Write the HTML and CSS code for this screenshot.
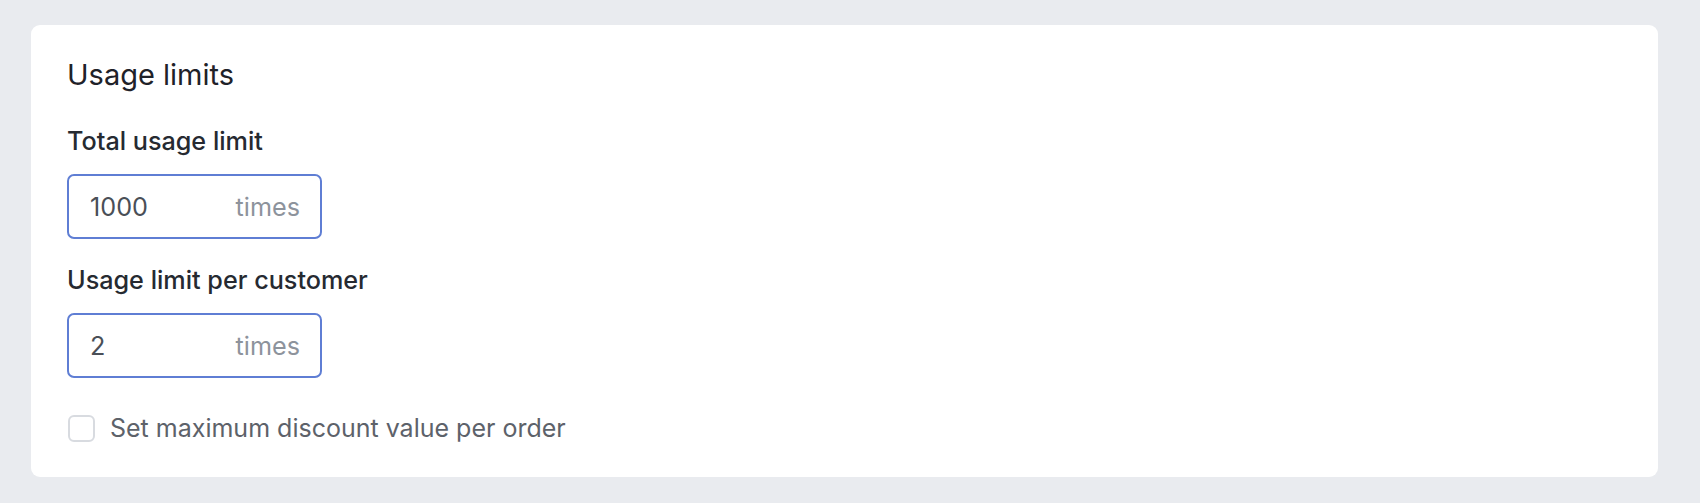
FILE: index.html
```html
<!DOCTYPE html>
<html>
<head>
<meta charset="utf-8">
<link rel="stylesheet" href="styles.css">
</head>
<body>
<div class="page">
  <section class="card">
    <h2 class="title">Usage limits</h2>
    <div class="field">
      <label class="label">Total usage limit</label>
      <div class="input">
        <span class="value">1000</span>
        <span class="suffix">times</span>
      </div>
    </div>
    <div class="field">
      <label class="label">Usage limit per customer</label>
      <div class="input">
        <span class="value">2</span>
        <span class="suffix">times</span>
      </div>
    </div>
    <label class="check">
      <span class="box"></span>
      <span class="check-text">Set maximum discount value per order</span>
    </label>
  </section>
</div>
</body>
</html>
```

FILE: styles.css
```css
* { box-sizing: border-box; }
html, body { margin: 0; padding: 0; }
body {
  background: #e9ebef;
  font-family: Inter, "Noto Sans", "Liberation Sans", sans-serif;
  width: 1700px;
  height: 503px;
  overflow: hidden;
}
.page {
  padding: 25px 42px 0 31px;
}
.card {
  background: #ffffff;
  border-radius: 9px;
  height: 452px;
  padding: 33px 36px 0 36px;
  display: flex;
  flex-direction: column;
}
.title {
  margin: 0;
  font-size: 29px;
  line-height: 34px;
  font-weight: 400;
  color: #1f2229;
}
.field {
  display: flex;
  flex-direction: column;
  gap: 17px;
  margin-top: 33px;
}
.field + .field { margin-top: 25px; }
.label {
  font-size: 25.2px;
  line-height: 32px;
  font-weight: 500;
  color: #262a31;
}
.input {
  width: 255px;
  height: 65px;
  border: 2px solid #5f7ed4;
  border-radius: 7px;
  display: flex;
  align-items: center;
  justify-content: space-between;
  padding: 0 20px 0 21px;
  font-size: 25.2px;
}
.value { color: #4a4f57; }
.suffix { color: #8d939c; }
.check {
  margin-top: 34px;
  display: flex;
  align-items: center;
  gap: 15px;
  height: 32px;
  padding-left: 1px;
}
.box {
  width: 27px;
  height: 27px;
  border: 2px solid #d8dbe0;
  border-radius: 6px;
  flex: none;
}
.check-text {
  font-size: 25px;
  line-height: 32px;
  color: #5d626a;
}
```
